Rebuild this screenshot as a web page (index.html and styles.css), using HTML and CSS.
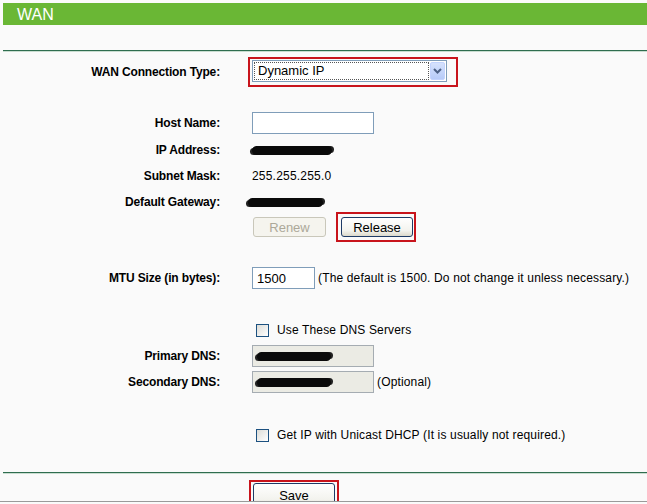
FILE: index.html
```html
<!DOCTYPE html>
<html lang="en">
<head>
    <meta charset="utf-8" />
    <title>WAN</title>
    <link rel="stylesheet" href="styles.css">
</head>
<body>
    <div class="title">WAN</div>
    <div class="rule"></div>

    <div class="form">
        <div class="row row-type">
            <span class="lbl">WAN Connection Type:</span>
            <div class="val">
                <span class="mark mark-select">
                    <span class="select">
                        <span class="select-text">Dynamic IP</span>
                        <span class="select-btn">
                            <svg width="9" height="6" viewBox="0 0 9 6"><path d="M1 1 L4.5 4.5 L8 1" fill="none" stroke="#4d6185" stroke-width="2"/></svg>
                        </span>
                    </span>
                </span>
            </div>
        </div>

        <div class="row row-host">
            <span class="lbl">Host Name:</span>
            <div class="val"><span class="input input-host"></span></div>
        </div>
        <div class="row">
            <span class="lbl">IP Address:</span>
            <div class="val"><span class="blob blob-ip"></span></div>
        </div>
        <div class="row">
            <span class="lbl">Subnet Mask:</span>
            <div class="val"><span class="plain">255.255.255.0</span></div>
        </div>
        <div class="row">
            <span class="lbl">Default Gateway:</span>
            <div class="val"><span class="blob blob-gw"></span></div>
        </div>
        <div class="row row-btns">
            <span class="lbl"></span>
            <div class="val">
                <span class="btn btn-off">Renew</span>
                <span class="mark mark-release"><span class="btn">Release</span></span>
            </div>
        </div>

        <div class="row row-mtu">
            <span class="lbl">MTU Size (in bytes):</span>
            <div class="val">
                <span class="input input-mtu">1500</span>
                <span class="note">(The default is 1500. Do not change it unless necessary.)</span>
            </div>
        </div>

        <div class="row row-check">
            <span class="lbl"></span>
            <div class="val"><span class="check"></span><span class="note">Use These DNS Servers</span></div>
        </div>
        <div class="row">
            <span class="lbl">Primary DNS:</span>
            <div class="val"><span class="input input-dns"><span class="blob blob-dns"></span></span></div>
        </div>
        <div class="row">
            <span class="lbl">Secondary DNS:</span>
            <div class="val">
                <span class="input input-dns"><span class="blob blob-dns"></span></span>
                <span class="note">(Optional)</span>
            </div>
        </div>

        <div class="row row-unicast">
            <span class="lbl"></span>
            <div class="val"><span class="check"></span><span class="note">Get IP with Unicast DHCP (It is usually not required.)</span></div>
        </div>
    </div>

    <div class="rule rule-end"></div>
    <div class="footer">
        <span class="mark mark-save"><span class="btn btn-save">Save</span></span>
    </div>
</body>
</html>
```

FILE: styles.css
```css
html, body {
    margin: 0;
    padding: 0;
    overflow: hidden;
}

body {
    width: 647px;
    height: 504px;
    background: #fafafa;
    font-family: "Liberation Sans", Arial, sans-serif;
    font-size: 12px;
    color: #000;
}

.title {
    margin: 3px 0 0 3px;
    height: 22px;
    line-height: 23px;
    padding-left: 14px;
    background: #6ab735;
    color: #fff;
    font-size: 16px;
}

.rule {
    margin: 25px 0 0 3px;
    height: 1px;
    border-top: 1px solid #2f6d4f;
    background: #c9ddd0;
}

.form {
    padding-top: 2px;
}

.row {
    display: grid;
    grid-template-columns: 220px 1fr;
    column-gap: 32px;
    align-items: center;
    height: 26px;
}

.lbl {
    text-align: right;
    font-weight: bold;
    letter-spacing: -0.15px;
}

.val {
    display: flex;
    align-items: center;
}

.row-type { height: 36px; }
.row-host { margin-top: 18px; height: 29px; }
.row-btns { height: 30px; margin-top: -3px; }
.row-mtu { margin-top: 23px; }
.row-check { margin-top: 26px; }
.row-unicast { margin-top: 27px; }

/* red highlight boxes */
.mark {
    display: inline-flex;
    border: 2px solid #c8141c;
}

.mark-select {
    margin-left: -4px;
    padding: 1px 9px 3px 2px;
}

.mark-release {
    margin-left: 10px;
    padding: 3px 1px 3px 3px;
}

.select {
    display: flex;
    width: 195px;
    height: 22px;
    box-sizing: border-box;
    border: 1px solid #7f9db9;
    background: #fff;
}

.select-text {
    flex: 1;
    margin: 1px;
    padding-left: 3px;
    border: 1px dotted #555;
    line-height: 16px;
    font-size: 13px;
}

.select-btn {
    width: 15px;
    margin: 1px 1px 1px 0;
    display: flex;
    align-items: center;
    justify-content: center;
    background: linear-gradient(#d6e2fd, #b7cbf8);
    border: 1px solid #c3d3fd;
    border-radius: 2px;
    box-sizing: border-box;
}

.input {
    display: inline-flex;
    align-items: center;
    height: 22px;
    box-sizing: border-box;
    border: 1px solid #7f9db9;
    background: #fff;
    padding-left: 4px;
    font-size: 13px;
}

.input-host { width: 122px; }
.input-mtu { width: 63px; }
.input-dns {
    width: 122px;
    background: #ebebe4;
    border-color: #a5acb2;
    padding-left: 2px;
}

.plain {
    font-size: 12px;
    letter-spacing: 0.2px;
}

.blob {
    display: inline-block;
    height: 9px;
    background: #0a0a0a;
    border-radius: 5px;
    box-shadow: 3px -1px 0 -1px #222, -3px 1px 0 -1px #222;
}

.blob-ip { width: 80px; margin-left: 0; }
.blob-gw { width: 75px; margin-left: -4px; }
.blob-dns { width: 74px; margin-left: 2px; }

.btn {
    display: inline-flex;
    align-items: center;
    justify-content: center;
    width: 72px;
    height: 20px;
    box-sizing: border-box;
    border: 1px solid #1e3b66;
    border-radius: 3px;
    background: linear-gradient(#ffffff, #f3f3ee 70%, #dcd9cb);
    font-size: 13px;
}

.btn-off {
    margin-left: 1px;
    width: 73px;
    border-color: #c9c7ba;
    background: #f5f4ee;
    color: #aca899;
}

.note {
    margin-left: 3px;
    font-size: 12px;
    letter-spacing: 0.15px;
}

.check {
    width: 13px;
    height: 13px;
    box-sizing: border-box;
    margin-left: 4px;
    border: 1px solid #1c5180;
    background: linear-gradient(135deg, #dcdcd7, #fff);
}

.check + .note {
    margin-left: 8px;
}

.rule-end {
    margin-top: 24px;
}

.footer {
    padding: 6px 0 0 249px;
    height: 28px;
    box-sizing: border-box;
    border-bottom: 1px solid #9a9a9a;
    overflow: hidden;
}

.mark-save {
    padding: 1px 2px 6px 2px;
}

.btn-save {
    width: 82px;
    height: 24px;
    align-items: flex-start;
    padding-top: 4px;
}
```
